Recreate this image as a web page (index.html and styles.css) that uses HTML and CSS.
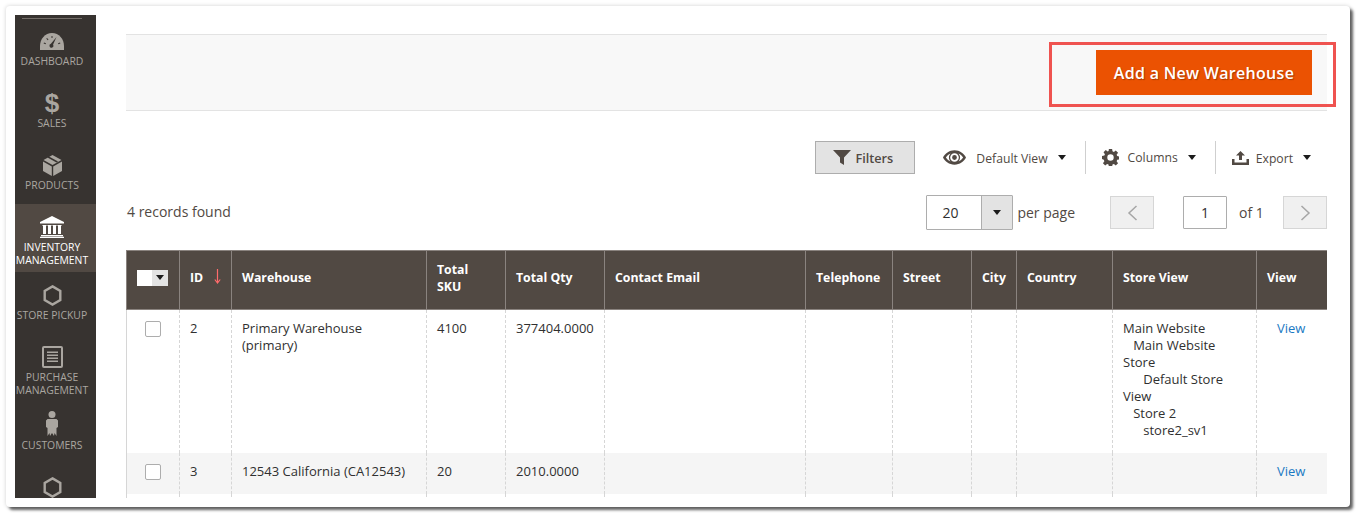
FILE: index.html
```html
<!DOCTYPE html>
<html lang="en">
<head>
<meta charset="utf-8">
<title>Warehouses</title>
<link rel="stylesheet" href="styles.css">
</head>
<body>
<div class="frame">
  <div class="inner">
    <nav class="sidebar">
      <a class="item">
        <span class="ic"><svg width="24" height="17" viewBox="0 0 24 17"><path fill="#aaa6a0" d="M12 0C5 0 0 6 0 13v4h24v-4C24 6 19 0 12 0z"/><path fill="#373330" d="M16.500 4l-3.400 7.600a2 2 0 1 1-2.200-.8zM4 9.500l2 .8-.4.9-2-.8zM7 5l1.500 1.500-.7.7L6.300 5.700zM11.500 3h1v2h-1zM20 9.500l.4.9-2 .8-.4-.9z"/></svg></span>
        <span class="lb">Dashboard</span>
      </a>
      <a class="item">
        <span class="ic"><span class="dollar">$</span></span>
        <span class="lb">Sales</span>
      </a>
      <a class="item">
        <span class="ic"><svg width="19" height="21" viewBox="0 0 19 21"><path fill="#aaa6a0" d="M9.500 0l9 5-9 5-9-5zM0 6.500l8.800 5V21L0 16zM19 6.500l-8.800 5V21L19 16z"/><path fill="#373330" d="M4.500 2.400l9 5 1.500-.8-9-5z"/></svg></span>
        <span class="lb">Products</span>
      </a>
      <a class="item tall active">
        <span class="ic"><svg width="24" height="22" viewBox="0 0 24 22"><path fill="#fff" d="M12 0l12 6v1.500H0V6zM1 19h22v1.200H1zM0 20.800h24V22H0zM2.500 9h4v1H6v8H3v-8h-.5zM7.500 9h4v1H11v8H8v-8h-.5zM12.500 9h4v1H16v8h-3v-8h-.5zM17.500 9h4v1H21v8h-3v-8h-.5z"/></svg></span>
        <span class="lb">Inventory Management</span>
      </a>
      <a class="item">
        <span class="ic"><svg width="19" height="21" viewBox="0 0 19 21"><path fill="none" stroke="#aaa6a0" stroke-width="2.400" d="M9.500 1.400l7.800 4.500v9.200l-7.800 4.500-7.800-4.500V5.900z"/></svg></span>
        <span class="lb">Store Pickup</span>
      </a>
      <a class="item tall">
        <span class="ic"><svg width="21" height="22" viewBox="0 0 21 22"><rect x="1" y="1" width="19" height="20" rx="1" fill="none" stroke="#aaa6a0" stroke-width="2"/><path fill="#aaa6a0" d="M5 5.500h11V7H5zM5 8.500h11V10H5zM5 11.500h11V13H5zM5 14.500h11V16H5z"/></svg></span>
        <span class="lb">Purchase Management</span>
      </a>
      <a class="item">
        <span class="ic"><svg class="person" width="12" height="25" viewBox="0 0 12 25"><circle cx="6" cy="3.500" r="3.500" fill="#aaa6a0"/><path fill="#aaa6a0" d="M1.500 8h9l1.500 1.500V16l-1.500 1v8l-2-3-.5 3-2-3-2 3-.5-3-2 3v-8L0 16V9.500z"/></svg></span>
        <span class="lb">Customers</span>
      </a>
      <a class="item">
        <span class="ic"><svg width="19" height="21" viewBox="0 0 19 21"><path fill="none" stroke="#aaa6a0" stroke-width="2.400" d="M9.500 1.400l7.800 4.500v9.200l-7.800 4.500-7.800-4.500V5.900z"/></svg></span>
      </a>
    </nav>
    <main class="main">
      <div class="actions"><button class="primary">Add a New Warehouse</button></div>

      <div class="toolbar">
        <button class="filters"><svg width="18" height="15" viewBox="0 0 18 15"><path fill="#514943" d="M0 0h18l-7 7.500V15l-4-2.500V7.500z"/></svg>Filters</button>
        <span class="tool view">
          <svg width="23" height="15" viewBox="0 0 24 15"><path fill-rule="evenodd" fill="#514943" d="M12 0c5.500 0 10 3.500 12 7.500C22 11.500 17.500 15 12 15S2 11.500 0 7.500C2 3.500 6.500 0 12 0zm0 3a4.500 4.500 0 1 0 0 9 4.500 4.500 0 0 0 0-9zm0 2a2.500 2.500 0 1 1 0 5 2.500 2.500 0 0 1 0-5zM3 7.500c1.300 2 3 3.400 4.800 4.200a7 7 0 0 1 0-8.400C6 4.100 4.300 5.500 3 7.500zm18 0c-1.300-2-3-3.400-4.800-4.200a7 7 0 0 1 0 8.400c1.800-.8 3.500-2.200 4.800-4.200z"/></svg>
          <span class="tool-text">Default View</span><i class="caret"></i>
        </span>
        <span class="tool cols">
          <svg width="17" height="17" viewBox="0 0 18 18"><path fill-rule="evenodd" fill="#514943" d="M7.300 0h3.400l.4 2.500 1.500.6 2-1.500 2.400 2.400-1.500 2 .6 1.500 2.400.4v3.200l-2.400.4-.6 1.500 1.500 2-2.400 2.400-2-1.500-1.500.6-.4 2.500H7.300l-.4-2.500-1.500-.6-2 1.500-2.400-2.400 1.500-2-.6-1.500L0 10.600V7.400l2.500-.4.6-1.500-1.500-2L4 1.100l2 1.500 1-.6zM9 5.600a3.400 3.400 0 1 0 0 6.800 3.400 3.400 0 0 0 0-6.800z"/></svg>
          <span class="tool-text">Columns</span><i class="caret"></i>
        </span>
        <span class="tool export">
          <svg width="17" height="14" viewBox="0 0 17 14"><path fill="#514943" d="M8.500 0l4.500 4.500h-3V9H7V4.500H4zM0 8h2.500v3.500h12V8H17v6H0z"/></svg>
          <span class="tool-text">Export</span><i class="caret"></i>
        </span>
      </div>

      <div class="pager-row">
        <span class="found">4 records found</span>
        <span class="per">
          <span class="page-select"><span class="ps-val">20</span><span class="ps-btn"><i class="caret"></i></span></span>
          <span class="per-label">per page</span>
        </span>
        <span class="pager">
          <span class="nav"><svg width="11" height="16" viewBox="0 0 11 16"><path fill="none" stroke="#a6a6a6" stroke-width="1.500" d="M9.500 1L2 8l7.500 7"/></svg></span>
          <span class="page-input">1</span>
          <span class="of">of 1</span>
          <span class="nav"><svg width="11" height="16" viewBox="0 0 11 16"><path fill="none" stroke="#a6a6a6" stroke-width="1.500" d="M1.500 1L9 8l-7.500 7"/></svg></span>
        </span>
      </div>

      <table class="grid">
        <colgroup>
          <col class="c1"><col class="c2"><col class="c3"><col class="c4"><col class="c5"><col class="c6"><col class="c7"><col class="c8"><col class="c9"><col class="c10"><col class="c11"><col class="c12">
        </colgroup>
        <thead>
          <tr>
            <th class="sel"><span class="mass"><span class="mass-box"></span><span class="mass-btn"><i class="caret small"></i></span></span></th>
            <th class="sorted">ID<svg class="sort" width="7" height="15" viewBox="0 0 7 15"><path fill="none" stroke="#ff6b6b" stroke-width="1.200" d="M3.500 0v14M.8 10.500l2.700 3.500 2.700-3.500"/></svg></th>
            <th>Warehouse</th>
            <th>Total SKU</th>
            <th>Total Qty</th>
            <th>Contact Email</th>
            <th>Telephone</th>
            <th>Street</th>
            <th>City</th>
            <th>Country</th>
            <th>Store View</th>
            <th>View</th>
          </tr>
        </thead>
        <tbody>
          <tr>
            <td class="sel"><span class="check"></span></td>
            <td>2</td>
            <td>Primary Warehouse (primary)</td>
            <td>4100</td>
            <td>377404.0000</td>
            <td></td><td></td><td></td><td></td><td></td>
            <td>Main Website<br>&nbsp;&nbsp;&nbsp;Main Website Store<br>&nbsp;&nbsp;&nbsp;&nbsp;&nbsp;&nbsp;Default Store View<br>&nbsp;&nbsp;&nbsp;Store 2<br>&nbsp;&nbsp;&nbsp;&nbsp;&nbsp;&nbsp;store2_sv1</td>
            <td class="link">View</td>
          </tr>
          <tr class="alt">
            <td class="sel"><span class="check"></span></td>
            <td>3</td>
            <td>12543 California (CA12543)</td>
            <td>20</td>
            <td>2010.0000</td>
            <td></td><td></td><td></td><td></td><td></td><td></td>
            <td class="link">View</td>
          </tr>
          <tr class="filler">
            <td></td><td></td><td></td><td></td><td></td><td></td><td></td><td></td><td></td><td></td><td></td><td></td>
          </tr>
        </tbody>
      </table>
    </main>
  </div>
  <div class="highlight"></div>
</div>
</body>
</html>
```

FILE: styles.css
```css
* { box-sizing: border-box; }
html, body { margin: 0; padding: 0; background: #fff; }
body { padding: 6px; height: 519px; overflow: hidden; font-family: "Open Sans", sans-serif; color: #303030; font-size: 13px; }

.frame {
  position: relative;
  width: 1344px;
  height: 501px;
  padding: 9px 23px 9px 9px;
  background: #fff;
  border-radius: 4px;
  box-shadow: 3px 3px 3px rgba(0,0,0,.6), 0 0 4px rgba(0,0,0,.18);
}
.inner { display: flex; height: 483px; overflow: hidden; }

/* Sidebar */
.sidebar {
  flex: 0 0 81px;
  width: 81px;
  margin-right: 30px;
  padding-top: 3px;
  background: #373330;
  display: flex;
  flex-direction: column;
  position: relative;
}
.sidebar::before {
  content: "";
  position: absolute;
  left: 7px; right: 14px; top: 3px;
  height: 1px;
  background: #736d68;
}
.item {
  flex: 0 0 62px;
  height: 62px;
  padding: 12px 7px 0 0;
  display: flex;
  flex-direction: column;
  align-items: center;
  color: #aaa6a0;
}
.item.tall { flex-basis: 68px; height: 68px; }
.item.active { background: #514943; color: #fff; }
.ic { height: 22px; display: flex; align-items: center; justify-content: center; }
.dollar { font: 700 26px/22px "Liberation Sans", sans-serif; color: #aaa6a0; }
.person { margin-top: -3px; }
.lb { margin-top: 3px; font-size: 10.400px; line-height: 13px; text-transform: uppercase; text-align: center; white-space: normal; width: 74px; }

/* Main */
.main { flex: 1 1 auto; min-width: 0; padding-top: 19px; }
.actions {
  height: 77px;
  padding: 15px 15px 0 0;
  display: flex;
  justify-content: flex-end;
  background: #f8f8f8;
  border-top: 1px solid #e3e3e3;
  border-bottom: 1px solid #e3e3e3;
}
.primary {
  width: 216px;
  height: 45px;
  border: 0;
  padding: 0;
  background: #eb5202;
  color: #fff;
  font: 600 16px "Open Sans", sans-serif;
  letter-spacing: .3px;
  text-shadow: 1px 1px 1px rgba(0,0,0,.3);
}
.highlight {
  position: absolute;
  left: 1043px;
  top: 36px;
  width: 287px;
  height: 65px;
  border: 3px solid #ef5350;
}

.toolbar { margin-top: 30px; height: 33px; display: flex; justify-content: flex-end; align-items: center; padding-right: 16px; }
.filters {
  width: 100px;
  height: 33px;
  margin-right: 28px;
  padding: 0 4px 0 0;
  display: flex;
  align-items: center;
  justify-content: center;
  gap: 4px;
  background: #e3e3e3;
  border: 1px solid #adadad;
  font: 600 12.700px "Open Sans", sans-serif;
  color: #514943;
}
.tool { display: flex; align-items: center; height: 33px; color: #514943; font-size: 12.200px; }
.tool-text { line-height: 35px; height: 33px; }
.cols .tool-text { line-height: 33px; }
.view { gap: 10px; }
.cols, .export { border-left: 1px solid #cfcfcf; }
.cols { margin-left: 19px; padding-left: 16px; gap: 9px; }
.export { margin-left: 19px; padding-left: 16px; gap: 7px; }
.caret { display: inline-block; width: 0; height: 0; border-left: 4px solid transparent; border-right: 4px solid transparent; border-top: 5px solid #1c1c1c; }
.tool .caret { margin-left: 2px; }
.cols .caret { margin-left: 1px; }
.view .caret { margin-left: 0; }
.export .caret { margin-left: 3px; }

.pager-row { margin-top: 21px; height: 35px; display: flex; align-items: center; font-size: 14px; color: #514943; padding-left: 1px; }
.found { flex: 1 1 auto; margin-bottom: 2px; }
.per { display: flex; align-items: center; gap: 4px; margin-right: 35px; }
.page-select { display: flex; width: 87px; height: 35px; border: 1px solid #adadad; border-radius: 1px; }
.ps-val { width: 54px; padding-right: 8px; text-align: center; line-height: 33px; color: #303030; }
.ps-btn { flex: 1; display: flex; align-items: center; justify-content: center; background: #e3e3e3; border-left: 1px solid #adadad; }
.pager { display: flex; align-items: center; height: 33px; }
.nav { width: 44px; height: 33px; display: flex; align-items: center; justify-content: center; background: #f0f0f0; border: 1px solid #d6d6d6; }
.page-input { width: 44px; height: 33px; margin-left: 29px; border: 1px solid #adadad; border-radius: 1px; text-align: center; line-height: 31px; color: #303030; }
.of { width: 56px; padding-left: 12px; }

/* Grid */
.grid { margin-top: 20px; width: 1201px; table-layout: fixed; border-collapse: collapse; font-size: 13px; line-height: 17px; }
.c1 { width: 53px; } .c2 { width: 52px; } .c3 { width: 195px; } .c4 { width: 79px; }
.c5 { width: 99px; } .c6 { width: 201px; } .c7 { width: 87px; } .c8 { width: 79px; }
.c9 { width: 45px; } .c10 { width: 96px; } .c11 { width: 144px; } .c12 { width: 71px; }
.grid th {
  height: 59px;
  padding: 0 10px 5px;
  background: #514943;
  border: 1px solid #8a837f;
  color: #fff;
  font-weight: 700;
  font-size: 12.300px;
  text-align: left;
  line-height: 17px;
  white-space: normal;
}
.grid th.sorted { white-space: nowrap; }
.grid td {
  padding: 10px 10px 14px;
  vertical-align: top;
  border-left: 1px dashed #d6d6d6;
  border-right: 1px dashed #d6d6d6;
}
.grid td:first-child { border-left: 1px solid #d6d6d6; }
.grid td:last-child { border-right: 1px solid #d6d6d6; }
.alt td { background: #f5f5f5; }
.grid .filler td { height: 20px; padding: 0; }
.grid th.sel { padding: 0 0 5px; }
.grid td.sel { padding-left: 0; padding-right: 0; }
.mass { display: flex; width: 31px; height: 16px; margin-left: 10px; }
.mass-box { width: 15px; background: #fff; }
.mass-btn { flex: 1; display: flex; align-items: center; justify-content: center; background: #e3e3e3; }
.check { display: block; width: 16px; height: 16px; margin: 1px 0 0 18px; border: 1px solid #adadad; border-radius: 2px; background: #fff; }
.sort { margin-left: 11px; vertical-align: -2px; }
.grid td.link { padding-left: 20px; color: #1979c3; }
```
